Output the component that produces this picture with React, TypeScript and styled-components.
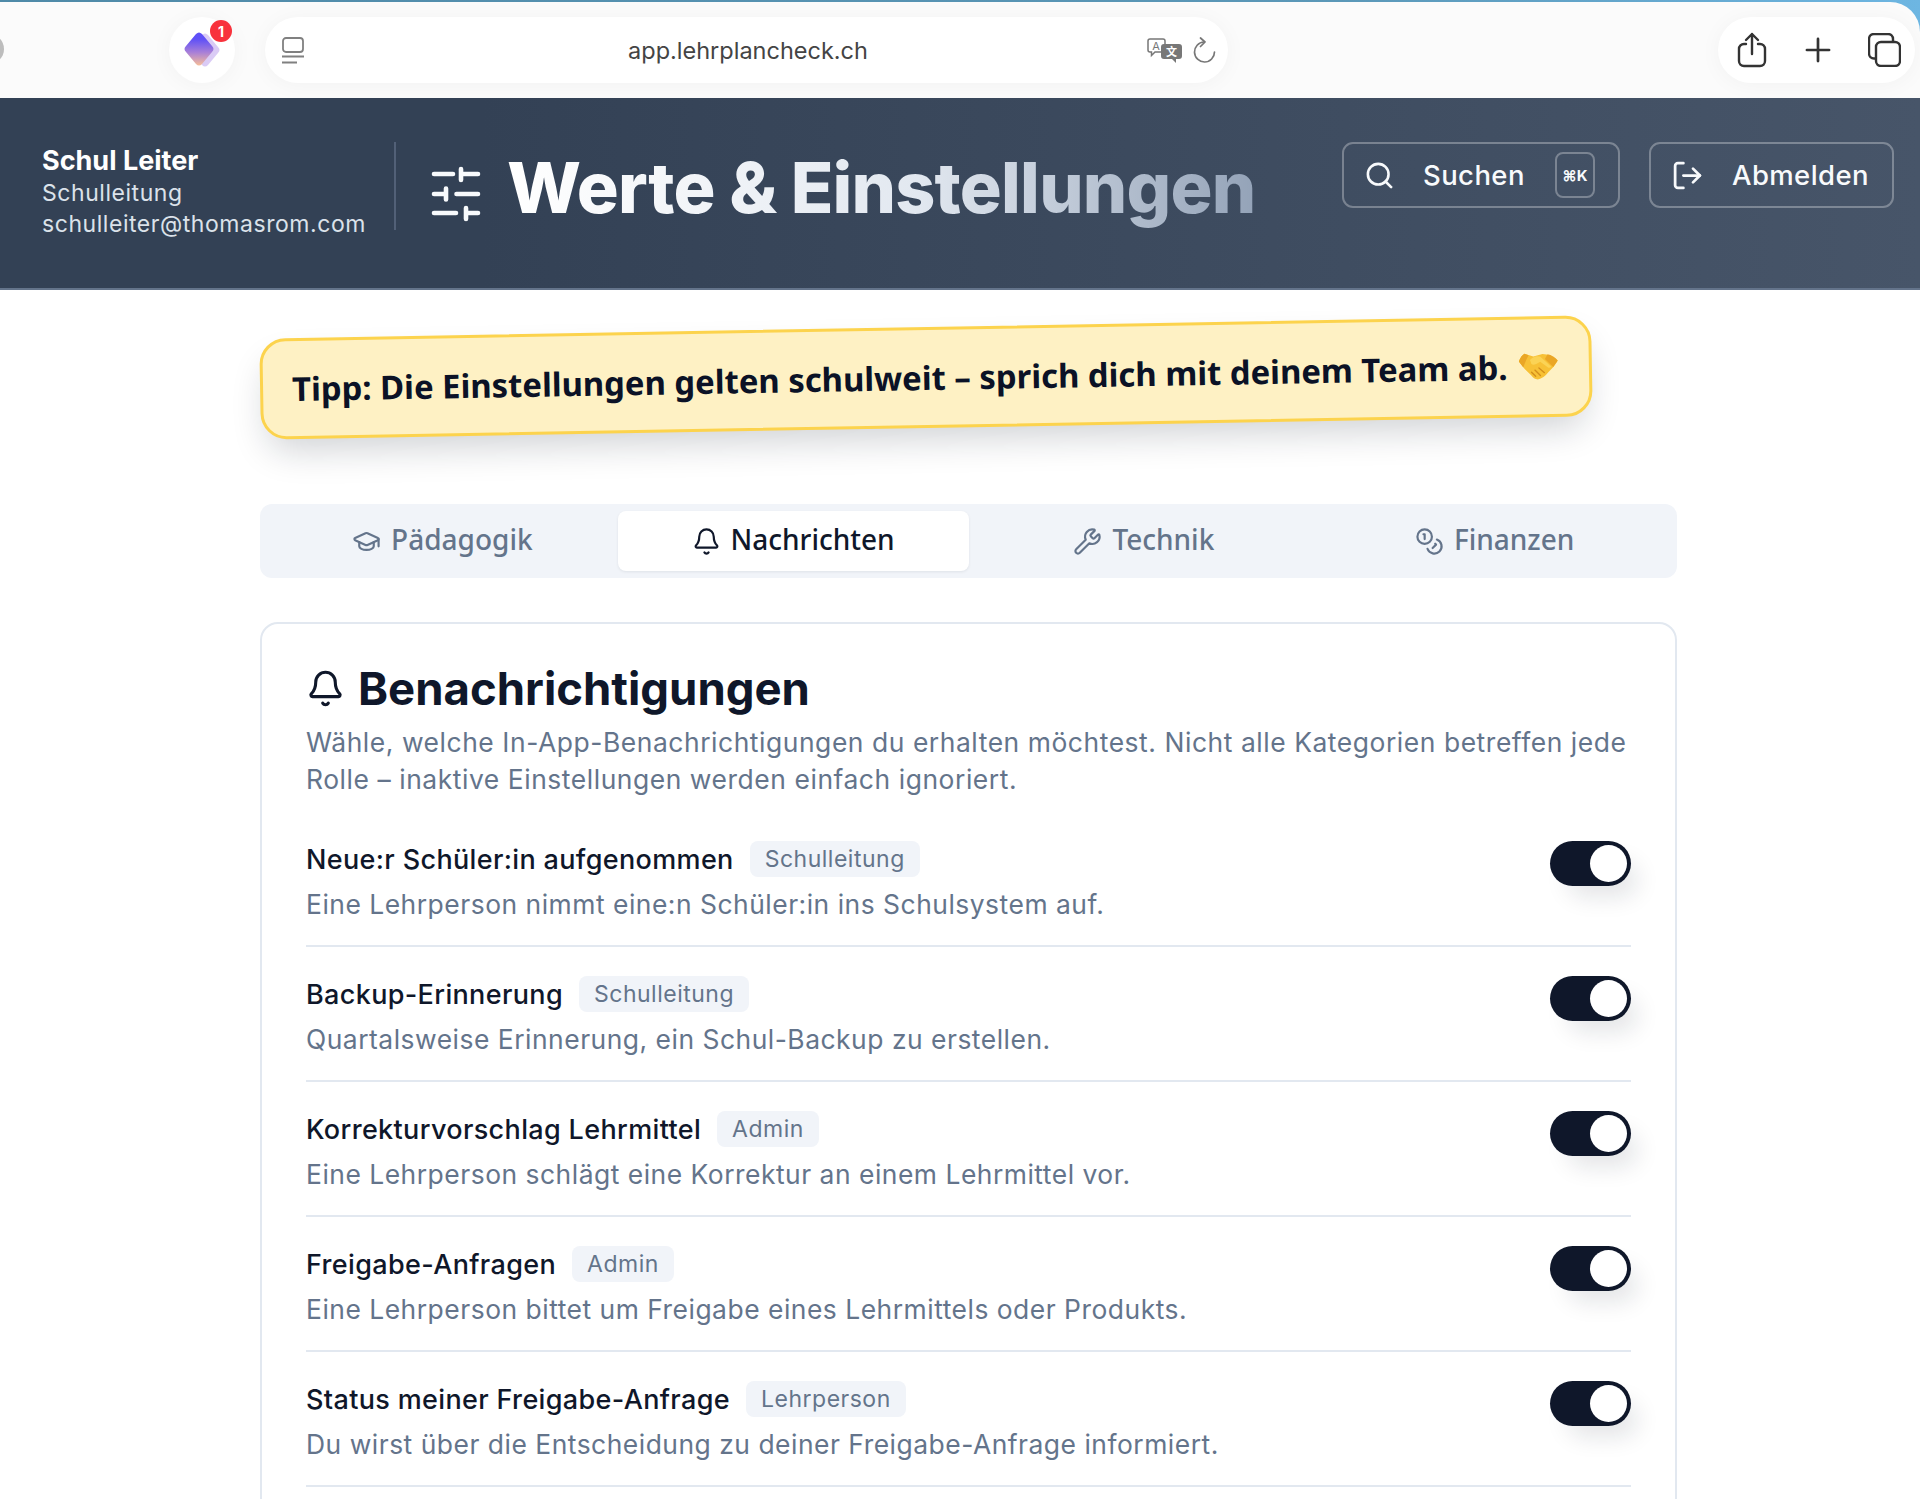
import React from 'react';
import styled, {createGlobalStyle} from 'styled-components';
import {Bell, Coins, GraduationCap, LogOut, Plus, Search, Wrench} from 'lucide-react';

const GlobalStyle = createGlobalStyle`
    * {
        box-sizing: border-box;
    }
    html, body {
        margin: 0;
        background: #fff;
    }
    body {
        font-family: 'Inter', 'Liberation Sans', sans-serif;
        color: #0f172a;
        height: 1499px;
        overflow: hidden;
    }
`

const rows = [
    {title: 'Neue:r Schüler:in aufgenommen', role: 'Schulleitung', text: 'Eine Lehrperson nimmt eine:n Schüler:in ins Schulsystem auf.'},
    {title: 'Backup-Erinnerung', role: 'Schulleitung', text: 'Quartalsweise Erinnerung, ein Schul-Backup zu erstellen.'},
    {title: 'Korrekturvorschlag Lehrmittel', role: 'Admin', text: 'Eine Lehrperson schlägt eine Korrektur an einem Lehrmittel vor.'},
    {title: 'Freigabe-Anfragen', role: 'Admin', text: 'Eine Lehrperson bittet um Freigabe eines Lehrmittels oder Produkts.'},
    {title: 'Status meiner Freigabe-Anfrage', role: 'Lehrperson', text: 'Du wirst über die Entscheidung zu deiner Freigabe-Anfrage informiert.'},
];

const tabs = [
    {label: 'Pädagogik', icon: GraduationCap},
    {label: 'Nachrichten', icon: Bell, active: true},
    {label: 'Technik', icon: Wrench},
    {label: 'Finanzen', icon: Coins},
];

const ExtensionLogo = () => (
    <svg width="38" height="38" viewBox="-1 -1 38 38">
        <defs>
            <linearGradient id="gemA" x1="0.5" y1="0" x2="0.5" y2="1">
                <stop offset="0.2" stopColor="#5f50f7"/>
                <stop offset="0.6" stopColor="#a87fd8"/>
                <stop offset="1" stopColor="#f6bd98"/>
            </linearGradient>
        </defs>
        <path d="M18 3 Q21 0 24 3 L34 15 Q37 18 34 21 L24 33 Q21 36 18 33 L8 21 Q5 18 8 15Z" fill="#d3c2f3" opacity="0.85"/>
        <path d="M12 2 Q15 -1 18 2 L28 14 Q31 17 28 20 L18 32 Q15 35 12 32 L2 20 Q-1 17 2 14Z" fill="url(#gemA)"/>
    </svg>
);

const ReaderIcon = () => (
    <svg width="22" height="27" viewBox="0 0 22 27" fill="none" stroke="#808080" strokeWidth="1.8">
        <rect x="1" y="1" width="20" height="14" rx="3"/>
        <path d="M0 19.5h22M0 25.5h15"/>
    </svg>
);

const TranslateIcon = () => (
    <svg width="36" height="25" viewBox="0 0 36 25">
        <path d="M3 1h13a2 2 0 0 1 2 2V12a2 2 0 0 1-2 2H8l-3.5 3.5V14H3a2 2 0 0 1-2-2V3a2 2 0 0 1 2-2Z" fill="#fff" stroke="#777" strokeWidth="1.5"/>
        <text x="5.2" y="11.5" fontSize="11" fill="#777" fontFamily="Inter, sans-serif">A</text>
        <path d="M17 6h15a3 3 0 0 1 3 3v9a3 3 0 0 1-3 3h-3v4l-4-4h-8a3 3 0 0 1-3-3V9a3 3 0 0 1 3-3Z" fill="#777"/>
        <text x="19" y="18" fontSize="11" fontWeight="700" fill="#fff" fontFamily="'Noto Sans CJK SC', sans-serif">文</text>
    </svg>
);

const ReloadIcon = () => (
    <svg width="23" height="26" viewBox="0 0 23 26" fill="none" stroke="#777" strokeWidth="1.7" strokeLinecap="round" strokeLinejoin="round">
        <path d="M11 5A10 10 0 1 0 21.5 15"/>
        <path d="M7.5 1L12 5 7.5 9.5"/>
    </svg>
);

const ShareIcon = () => (
    <svg width="30" height="36" viewBox="0 0 30 36" fill="none" stroke="#333" strokeWidth="2.4" strokeLinecap="round" strokeLinejoin="round">
        <path d="M9 12H7a5 5 0 0 0-5 5V29a5 5 0 0 0 5 5H23a5 5 0 0 0 5-5V17a5 5 0 0 0-5-5H21"/>
        <path d="M15 22V2M9 8l6-6 6 6"/>
    </svg>
);

const TabsIcon = () => (
    <svg width="33" height="34" viewBox="0 0 33 34" fill="none" stroke="#333" strokeWidth="2.4" strokeLinejoin="round">
        <path d="M8 25.5H6a5 5 0 0 1-5-5V6a5 5 0 0 1 5-5H20a5 5 0 0 1 5 5V9"/>
        <rect x="8" y="9" width="24" height="24" rx="5"/>
    </svg>
);

const HandshakeIcon = () => (
    <svg width="39" height="28" viewBox="55 60 115 82">
        <path d="M55 86 Q62 68 72 63 L98 72 L125 65 Q150 67 170 85 L158 102 L142 118 Q128 136 110 140 Q98 138 90 126 L72 108 Z" fill="#f7c136"/>
        <path d="M55 86 Q62 68 72 63 L84 68 Q74 86 68 104Z" fill="#eaa625"/>
        <path d="M170 85 Q158 70 140 66 L132 80 L156 104Z" fill="#eaa625"/>
        <path d="M88 82 Q100 68 118 72 L150 102 Q146 108 140 104 L118 88 Q100 100 92 94Z" fill="#fbd355"/>
        <path d="M92 118 L104 130 M102 112 L118 128 M114 106 L130 120" stroke="#d48f1c" strokeWidth="4" strokeLinecap="round"/>
    </svg>
);

const SlidersIcon = () => (
    <svg width="52" height="58" viewBox="10 10 52 58" fill="none" stroke="#f8fafc" strokeWidth="4.6" strokeLinecap="round">
        <path d="M14 19h19M41 19h17M41 14v11"/>
        <path d="M14 39h12M36.5 39h21.5M26 33.5v11"/>
        <path d="M14 58h22M46 58h12M46 53v11"/>
    </svg>
);

export default function App() {
    return (
        <>
            <GlobalStyle/>
            <BrowserBar>
                <BarSurface>
                    <BackStub/>
                    <ExtensionPill>
                        <ExtensionLogo/>
                        <ExtensionBadge>1</ExtensionBadge>
                    </ExtensionPill>
                    <AddressPill>
                        <ReaderIcon/>
                        <Url>app.lehrplancheck.ch</Url>
                        <AddressActions>
                            <TranslateIcon/>
                            <ReloadIcon/>
                        </AddressActions>
                    </AddressPill>
                    <ActionsPill>
                        <ShareIcon/>
                        <Plus size={38} color="#333" strokeWidth={1.7}/>
                        <TabsIcon/>
                    </ActionsPill>
                </BarSurface>
            </BrowserBar>

            <Header>
                <UserBlock>
                    <UserName>Schul Leiter</UserName>
                    <UserMeta>Schulleitung</UserMeta>
                    <UserMeta>schulleiter@thomasrom.com</UserMeta>
                </UserBlock>
                <PageTitleWrap>
                    <TitleIcon><SlidersIcon/></TitleIcon>
                    <PageTitle>Werte &amp; Einstellungen</PageTitle>
                </PageTitleWrap>
                <HeaderButtons>
                    <GhostButton $width={278}>
                        <Search size={31} strokeWidth={2}/>
                        <span>Suchen</span>
                        <Kbd>⌘K</Kbd>
                    </GhostButton>
                    <GhostButton $width={245}>
                        <LogOut size={33} strokeWidth={2}/>
                        <span>Abmelden</span>
                    </GhostButton>
                </HeaderButtons>
            </Header>

            <Main>
                <Tip>
                    <TipText>Tipp: Die Einstellungen gelten schulweit – sprich dich mit deinem Team ab.</TipText>
                    <TipEmoji><HandshakeIcon/></TipEmoji>
                </Tip>

                <TabBar>
                    {tabs.map(tab => (
                        <TabItem key={tab.label} $active={tab.active}>
                            <tab.icon size={29} strokeWidth={1.8}/>
                            <TabLabel>{tab.label}</TabLabel>
                        </TabItem>
                    ))}
                </TabBar>

                <Card>
                    <CardHeading>
                        <Bell size={39} strokeWidth={1.9}/>
                        Benachrichtigungen
                    </CardHeading>
                    <CardLead>
                        Wähle, welche In-App-Benachrichtigungen du erhalten möchtest. Nicht alle Kategorien betreffen jede
                        Rolle – inaktive Einstellungen werden einfach ignoriert.
                    </CardLead>
                    {rows.map(row => (
                        <SettingRow key={row.title}>
                            <div>
                                <SettingHead>
                                    <SettingTitle>{row.title}</SettingTitle>
                                    <RoleBadge>{row.role}</RoleBadge>
                                </SettingHead>
                                <SettingText>{row.text}</SettingText>
                            </div>
                            <Toggle><ToggleThumb/></Toggle>
                        </SettingRow>
                    ))}
                </Card>
            </Main>
        </>
    );
}

const BrowserBar = styled.div`
    height: 98px;
    padding-top: 2px;
    background: linear-gradient(90deg, #4f8aa8 0%, #5b98b8 70%, #6db6e2 100%);
`
const BarSurface = styled.div`
    position: relative;
    height: 96px;
    display: flex;
    align-items: center;
    background: #fbfbfb;
    border-top-right-radius: 30px;
`
const Pill = styled.div`
    height: 66px;
    background: #fff;
    border-radius: 33px;
    display: flex;
    align-items: center;
    box-shadow: 0 2px 22px rgba(0, 0, 0, 0.04);
`
const BackStub = styled.div`
    position: absolute;
    left: -26px;
    top: 32px;
    width: 30px;
    height: 30px;
    border-radius: 50%;
    background: #bdbdbd;
`
const ExtensionPill = styled(Pill)`
    position: relative;
    margin-left: 169px;
    width: 66px;
    justify-content: center;
`
const ExtensionBadge = styled.span`
    position: absolute;
    top: 3px;
    right: 3px;
    width: 22px;
    height: 22px;
    border-radius: 50%;
    background: #f8323c;
    color: #fff;
    font-size: 14px;
    font-weight: 700;
    display: flex;
    align-items: center;
    justify-content: center;
`
const AddressPill = styled(Pill)`
    margin-left: 30px;
    width: 963px;
    padding: 0 12px 0 17px;
`
const Url = styled.span`
    flex: 1;
    text-align: center;
    font-size: 23.5px;
    color: #444;
    padding-left: 45px;
`
const AddressActions = styled.div`
    display: flex;
    align-items: center;
    gap: 10px;
`
const ActionsPill = styled(Pill)`
    margin-left: auto;
    margin-right: 5px;
    width: 197px;
    padding: 0 14px 0 19px;
    justify-content: space-between;
`
const Header = styled.header`
    height: 192px;
    padding: 44px 26px 0 42px;
    display: flex;
    align-items: flex-start;
    background: linear-gradient(90deg, #334155 0%, #334155 25%, #475569 100%);
    border-bottom: 2px solid #64748b;
`
const UserBlock = styled.div`
    width: 354px;
    height: 88px;
    padding-top: 3px;
    border-right: 2px solid #526077;
    color: #e2e8f0;
`
const UserName = styled.div`
    font-size: 27px;
    font-weight: 700;
    line-height: 32px;
    margin-bottom: 1px;
    color: #fff;
`
const UserMeta = styled.div`
    font-size: 23px;
    line-height: 30.5px;
    letter-spacing: 0.55px;
    color: #dbe2ea;
`
const PageTitleWrap = styled.div`
    height: 88px;
    margin-left: 32px;
    display: flex;
    align-items: center;
    gap: 25px;
`
const TitleIcon = styled.span`
    display: flex;
    margin: 16px 0 0 2px;
`
const PageTitle = styled.h1`
    margin: 4px 0 0;
    font-size: 70px;
    line-height: 90px;
    font-weight: 800;
    letter-spacing: -0.8px;
    white-space: nowrap;
    background: linear-gradient(90deg, #fff 0%, #e2e8f0 55%, #94a3b8 100%);
    -webkit-background-clip: text;
    background-clip: text;
    color: transparent;
`
const HeaderButtons = styled.div`
    margin-left: auto;
    display: flex;
    flex-shrink: 0;
    gap: 29px;
`
const GhostButton = styled.button<{ $width: number }>`
    width: ${props => props.$width}px;
    height: 66px;
    padding: 0 0 0 20px;
    display: flex;
    align-items: center;
    gap: 28px;
    border: 2px solid rgba(255, 255, 255, 0.3);
    border-radius: 11px;
    background: transparent;
    color: #f8fafc;
    font-family: inherit;
    font-size: 27.5px;
    font-weight: 500;
    letter-spacing: 0.4px;
`
const Kbd = styled.span`
    width: 40px;
    height: 46px;
    margin-left: auto;
    margin-right: 23px;
    border: 2px solid rgba(255, 255, 255, 0.3);
    border-radius: 8px;
    display: flex;
    align-items: center;
    justify-content: center;
    font-size: 15px;
    font-weight: 700;
    letter-spacing: 0;
`
const Main = styled.main`
    padding: 37px 0 0 260px;
    width: 1677px;
`
const Tip = styled.div`
    width: 1332px;
    height: 101px;
    padding: 0 31px 0 29px;
    display: flex;
    align-items: center;
    justify-content: space-between;
    background: #fef1c4;
    border: 3.5px solid #fcd34d;
    border-radius: 26px;
    transform: rotate(-1deg);
    box-shadow: 0 18px 36px -8px rgba(15, 23, 42, 0.2);
`
const TipText = styled.span`
    font-family: 'Noto Sans', sans-serif;
    font-size: 32.85px;
    font-weight: 700;
    white-space: nowrap;
    color: #0b1226;
`
const TipEmoji = styled.span`
    display: flex;
    flex-shrink: 0;
    margin-top: -2px;
`
const TabBar = styled.div`
    margin-top: 76px;
    padding: 7px;
    display: grid;
    grid-template-columns: repeat(4, 1fr);
    background: #f1f4f9;
    border-radius: 12px;
`
const TabItem = styled.div<{ $active?: boolean }>`
    height: 60px;
    display: flex;
    align-items: center;
    justify-content: center;
    gap: 10px;
    border-radius: 8px;
    font-family: 'Noto Sans', sans-serif;
    font-size: 28px;
    font-weight: 500;
    color: ${props => (props.$active ? '#0f172a' : '#64748b')};
    background: ${props => (props.$active ? '#fff' : 'transparent')};
    box-shadow: ${props => (props.$active ? '0 1px 3px rgba(15, 23, 42, 0.08)' : 'none')};
`
const TabLabel = styled.span`
    margin-top: -4px;
`
const Card = styled.section`
    margin-top: 44px;
    padding: 38px 44px 80px;
    border: 2px solid #e2e8f0;
    border-radius: 18px;
    background: #fff;
`
const CardHeading = styled.h2`
    margin: 0 0 10px;
    height: 52px;
    display: flex;
    align-items: center;
    gap: 13px;
    font-size: 45.5px;
    font-weight: 700;
    color: #0f172a;
`
const CardLead = styled.p`
    margin: 0 0 14px;
    font-size: 26.45px;
    line-height: 37px;
    letter-spacing: 0.55px;
    color: #64748b;
`
const SettingRow = styled.div`
    padding: 29px 0 23px;
    display: flex;
    justify-content: space-between;
    align-items: flex-start;
    border-bottom: 2px solid #e2e8f0;
`
const SettingHead = styled.div`
    display: flex;
    align-items: center;
    gap: 16px;
    height: 36px;
`
const SettingTitle = styled.span`
    font-size: 27px;
    font-weight: 500;
    letter-spacing: 0.35px;
    color: #0f172a;
`
const RoleBadge = styled.span`
    height: 36px;
    padding: 0 15px;
    display: flex;
    align-items: center;
    border-radius: 8px;
    background: #f1f4f9;
    font-size: 23px;
    letter-spacing: 0.5px;
    color: #64748b;
`
const SettingText = styled.div`
    margin-top: 9px;
    font-size: 26.45px;
    line-height: 36px;
    letter-spacing: 0.5px;
    color: #64748b;
`
const Toggle = styled.div`
    width: 81px;
    height: 45px;
    padding: 4px;
    display: flex;
    justify-content: flex-end;
    border-radius: 23px;
    background: #0f172a;
    box-shadow: 12px 16px 24px -6px rgba(15, 23, 42, 0.12);
`
const ToggleThumb = styled.div`
    width: 37px;
    height: 37px;
    border-radius: 50%;
    background: #fff;
`
